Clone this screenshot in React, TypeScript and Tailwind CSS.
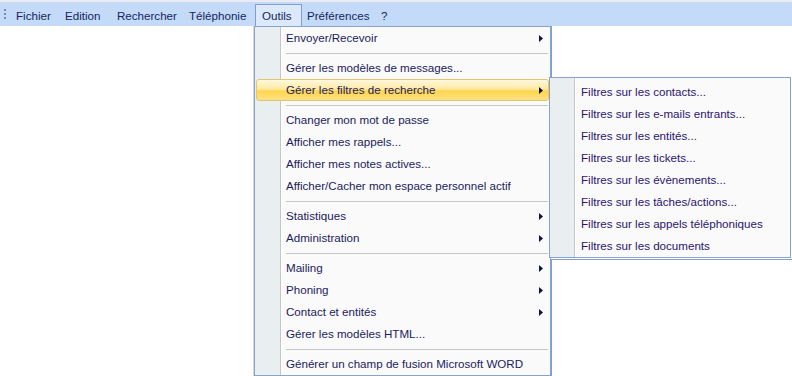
import { ReactNode } from 'react';

type Entry = { label: string; sub?: boolean; active?: boolean } | 'sep';

const menuBar = [
  { label: 'Fichier', w: 'w-[49px]' },
  { label: 'Edition', w: 'w-[52px]' },
  { label: 'Rechercher', w: 'w-[72px]' },
  { label: 'Téléphonie', w: 'w-[73px]' },
];

const outils: Entry[] = [
  { label: 'Envoyer/Recevoir', sub: true },
  'sep',
  { label: 'Gérer les modèles de messages...' },
  { label: 'Gérer les filtres de recherche', sub: true, active: true },
  'sep',
  { label: 'Changer mon mot de passe' },
  { label: 'Afficher mes rappels...' },
  { label: 'Afficher mes notes actives...' },
  { label: 'Afficher/Cacher mon espace personnel actif' },
  'sep',
  { label: 'Statistiques', sub: true },
  { label: 'Administration', sub: true },
  'sep',
  { label: 'Mailing', sub: true },
  { label: 'Phoning', sub: true },
  { label: 'Contact et entités', sub: true },
  { label: 'Gérer les modèles HTML...' },
  'sep',
  { label: 'Générer un champ de fusion Microsoft WORD' },
];

const filtres = [
  'Filtres sur les contacts...',
  'Filtres sur les e-mails entrants...',
  'Filtres sur les entités...',
  'Filtres sur les tickets...',
  'Filtres sur les évènements...',
  'Filtres sur les tâches/actions...',
  'Filtres sur les appels téléphoniques',
  'Filtres sur les documents',
];

const Arrow = () => (
  <svg width="4" height="7" viewBox="0 0 4 7" className="shrink-0">
    <path d="M0 0 L4 3.5 L0 7 Z" fill="#101048" />
  </svg>
);

const MenuRow = ({ children, active, sub }: { children: ReactNode; active?: boolean; sub?: boolean }) => (
  <div
    className={`relative flex h-[22px] items-center ${
      active
        ? 'mx-[1px] rounded-[3px] border border-[#e4c46e] bg-[linear-gradient(#fff8dc_0%,#ffeaa4_45%,#ffd54c_55%,#ffe286_100%)] pl-[29px] pr-[5px]'
        : 'pl-[31px] pr-[7px]'
    }`}
  >
    <span className="flex-1 whitespace-nowrap">{children}</span>
    {sub && <Arrow />}
  </div>
);

const Separator = () => (
  <div className="flex h-[8px] items-center pl-[31px] pr-[2px]">
    <div className="h-px flex-1 bg-[#c5c5c5]" />
  </div>
);

export default function App() {
  return (
    <div
      className="relative h-[376px] w-[792px] overflow-hidden bg-white text-[11.6px] text-[#1a1a60]"
      style={{ fontFamily: '"Liberation Sans", Arial, sans-serif' }}
    >
      <div className="h-[2px] bg-[#ecebf2]" />
      <div className="flex h-[24px] items-end bg-[#c3daf8] text-[#15245e]">
        <div className="ml-[4px] mr-[3px] flex h-[24px] w-[2px] flex-col justify-center gap-[2px]">
          <div className="h-[2px] w-[2px] bg-[#6d8cbb]" />
          <div className="h-[2px] w-[2px] bg-[#6d8cbb]" />
          <div className="h-[2px] w-[2px] bg-[#6d8cbb]" />
        </div>
        {menuBar.map((m) => (
          <div key={m.label} className={`flex h-[21px] items-center pl-[7px] ${m.w}`}>
            {m.label}
          </div>
        ))}
        <div className="relative z-20 flex h-[22px] w-[47px] items-center border border-b-0 border-[#7f9fd0] bg-[#dce9fb] pl-[6px]">
          Outils
        </div>
        <div className="flex h-[21px] w-[73px] items-center pl-[5px]">Préférences</div>
        <div className="flex h-[21px] items-center pl-[6px]">?</div>
      </div>

      {/* panel behind the menus */}
      <div className="absolute left-[551px] right-0 top-[259px] bottom-0 border-l border-t border-[#7f9fd0]" />
      <div className="absolute left-[551px] top-[26px] h-[60px] w-px bg-[#7f9fd0]" />

      {/* Outils dropdown */}
      <div className="absolute left-[254px] top-[26px] z-10 w-[297px] border border-[#8aa3cc] bg-[#fafafa] shadow-[-1px_0_0_#d8d8d8]">
        <div className="absolute bottom-0 left-0 top-0 w-[26px] border-r border-[#c5c5c5] bg-[#e9eef0] shadow-[1px_0_0_#ffffff]" />
        <div className="relative">
          {outils.map((e, i) =>
            e === 'sep' ? (
              <Separator key={i} />
            ) : (
              <MenuRow key={i} active={e.active} sub={e.sub}>
                {e.label}
              </MenuRow>
            ),
          )}
        </div>
      </div>

      {/* Filtres submenu */}
      <div className="absolute left-[549px] top-[77px] z-30 w-[242px] border border-[#8aa3cc] bg-[#fafafa] pt-[3px]">
        <div className="absolute bottom-0 left-0 top-0 w-[25px] border-r border-[#c5c5c5] bg-[#e9eef0] shadow-[1px_0_0_#ffffff]" />
        <div className="relative">
          {filtres.map((f) => (
            <div key={f} className="flex h-[22px] items-center whitespace-nowrap pl-[31px] text-[#2a1470]">
              {f}
            </div>
          ))}
        </div>
      </div>
    </div>
  );
}
